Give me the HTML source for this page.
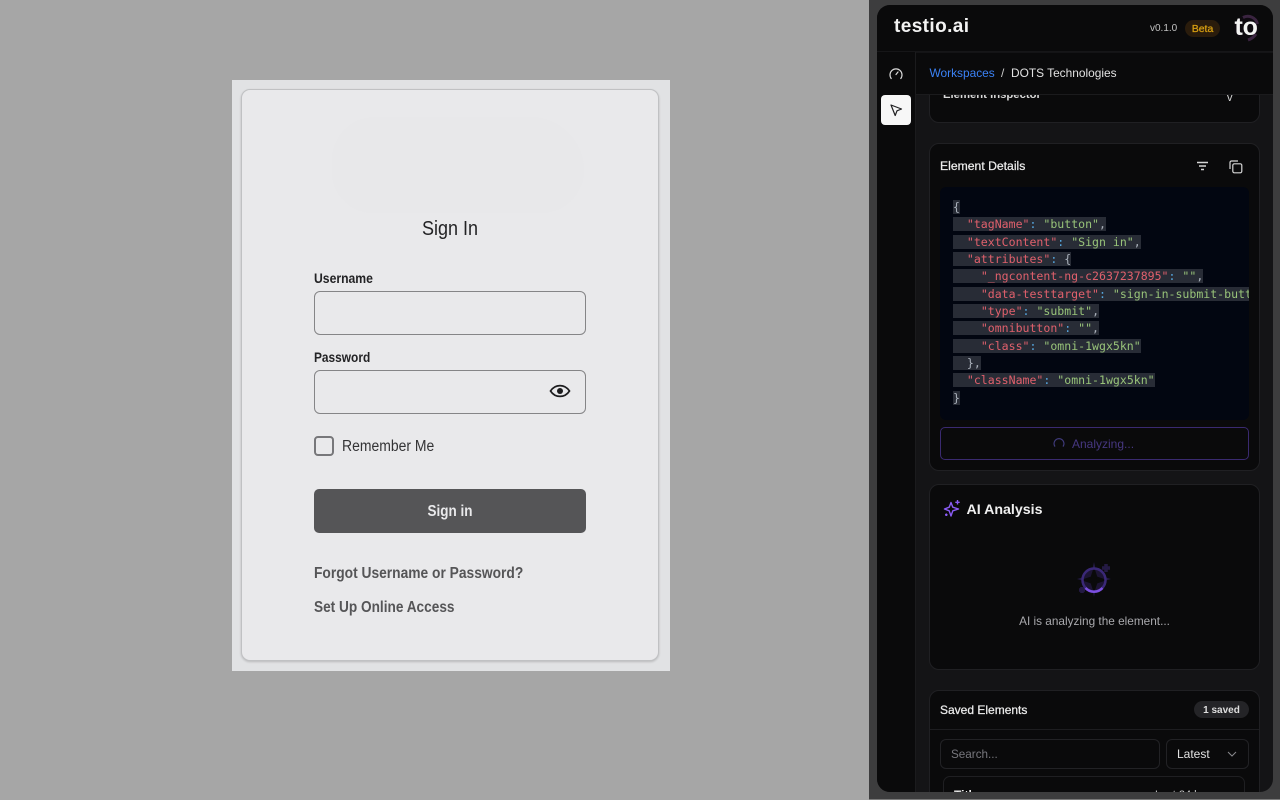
<!DOCTYPE html>
<html lang="en">
<head>
<meta charset="utf-8">
<title>Sign In</title>
<style>
*{box-sizing:border-box}
html,body{margin:0;padding:0;width:1280px;height:800px;overflow:hidden;background:#a6a6a6;font-family:"Liberation Sans",sans-serif}
.a{position:absolute}
.t{position:absolute;white-space:nowrap;line-height:1}
.sx{transform-origin:0 50%}
svg{position:absolute;display:block;overflow:visible}
.input{position:absolute;left:314px;width:272px;height:44px;border:1px solid #858587;border-radius:6px;background:#e9e9eb}
.login{color:#232325}
.card{position:absolute;left:13px;width:331px;background:#0a0a0b;border:1px solid #202023;border-radius:10px}
pre{margin:0;position:absolute;left:13px;top:12px;font:11.55px/17.33px "DejaVu Sans Mono","Liberation Mono",monospace;color:#c9d1d9;white-space:pre}
pre i{font-style:normal;background:#282c36}
.k{color:#e0606c}.s{color:#98c379}.p{color:#56a6de}.b{color:#aab1bb}
.med{-webkit-text-stroke:.25px currentColor}
</style>
</head>
<body>
<!-- Login page -->
<div class="a" style="left:232px;top:80px;width:438px;height:591px;background:#e1e2e4"></div>
<div class="a" style="left:241px;top:89px;width:418px;height:572px;background:#e9e9eb;border:1px solid #c0c1c3;border-radius:9px;box-shadow:0 1px 2px rgba(0,0,0,.18)"></div>
<div class="a" style="left:332px;top:117px;width:252px;height:96px;background:#e8e8ea;border-radius:48px 60px 48px 46px"></div>
<div class="t login" style="left:350px;width:200px;text-align:center;top:219px;font-size:20px;transform:scaleX(.9)">Sign In</div>
<div class="t login sx" style="left:314px;top:271px;font-size:14px;font-weight:bold;transform:scaleX(.87)">Username</div>
<div class="input" style="top:291px"></div>
<div class="t login sx" style="left:314px;top:350px;font-size:14px;font-weight:bold;transform:scaleX(.85)">Password</div>
<div class="input" style="top:370px"></div>
<svg style="left:549px;top:383px" width="22" height="16" viewBox="0 0 22 16" fill="none"><path d="M1.500 8C4 4.200 7.200 2.600 11 2.600S18 4.200 20.500 8C18 11.800 14.800 13.400 11 13.400S4 11.800 1.500 8Z" stroke="#1c1c1e" stroke-width="1.700"/><circle cx="11" cy="8" r="3" fill="#1c1c1e"/></svg>
<div class="a" style="left:314px;top:436px;width:20px;height:20px;border:2px solid #77777a;border-radius:4px"></div>
<div class="t sx" style="left:342px;top:439px;font-size:15.500px;color:#333335;transform:scaleX(.9)">Remember Me</div>
<div class="a" style="left:314px;top:489px;width:272px;height:44px;background:#555557;border-radius:5px"></div>
<div class="t" style="left:314px;width:272px;text-align:center;top:504px;font-size:15.500px;font-weight:bold;color:#e9e9eb;transform:scaleX(.87)">Sign in</div>
<div class="t sx" style="left:314px;top:566px;font-size:15.500px;font-weight:bold;color:#555557;transform:scaleX(.89)">Forgot Username or Password?</div>
<div class="t sx" style="left:314px;top:600px;font-size:15.500px;font-weight:bold;color:#555557;transform:scaleX(.88)">Set Up Online Access</div>

<!-- Extension panel -->
<div class="a" style="left:869px;top:0;width:411px;height:800px;background:#3d3d3e"></div>
<div class="a" style="left:869px;top:799px;width:411px;height:1px;background:#7a7a7a"></div>
<div class="a" style="left:877px;top:5px;width:396px;height:787px;background:#141416;border-radius:13px;overflow:hidden">
  <div class="a" style="left:0;top:0;width:396px;height:47px;background:#0a0a0b;border-bottom:1px solid #161618"></div>
  <div class="a" style="left:0;top:47px;width:39px;height:740px;background:#0a0a0b;border-right:1px solid #1b1b1d"></div>
</div>
<div class="t" style="left:894px;top:17px;font-size:19px;font-weight:bold;color:#f2f2f2;letter-spacing:.4px">testio.ai</div>
<div class="t" style="left:1150px;top:24px;font-size:10px;color:#c2c2c2">v0.1.0</div>
<div class="a" style="left:1185px;top:20px;width:35px;height:17px;background:#2a1c0c;border-radius:9px"></div>
<div class="t med" style="left:1185px;width:35px;text-align:center;top:24px;font-size:10.500px;color:#d9a011">Beta</div>
<div class="a" style="left:1234px;top:15px;width:25px;height:25px;background:#0e0a10;border-radius:50%"></div>
<svg style="left:1234px;top:15px" width="26" height="26" viewBox="0 0 26 26" fill="none"><path d="M9 2.500C15 -0.500 22 2.500 23.500 9" stroke="#3a2440" stroke-width="3"/><path d="M22 19C20 22 17 24 14 25" stroke="#3a2440" stroke-width="3"/></svg>
<div class="t" style="left:1234.500px;top:15px;font-size:25px;font-weight:bold;color:#f4f4f4;letter-spacing:-.2px">to</div>

<!-- Cards (clipped by panel viewport) -->
<div class="a" style="left:916px;top:53px;width:357px;height:739px;overflow:hidden">
  <div class="card" style="top:20px;height:50px"></div>
  <div class="t" style="left:27px;top:37px;font-size:11.300px;font-weight:bold;color:#d8d8d8">Element Inspector</div>
  <div class="t" style="left:311px;top:40px;font-size:11px;color:#d8d8d8">v</div>

  <div class="card" style="top:90px;height:328px"></div>
  <div class="t med" style="left:24px;top:107px;font-size:12.200px;color:#ececec">Element Details</div>
  <svg style="left:280px;top:108px" width="13" height="11" viewBox="0 0 13 11" fill="none" stroke="#d6d6d6" stroke-width="1.400"><path d="M1 1.500H12M3 5H10M5 8.500H8"/></svg>
  <svg style="left:313px;top:107px" width="14" height="14" viewBox="0 0 14 14" fill="none" stroke="#d6d6d6" stroke-width="1.200"><rect x="3.800" y="3.800" width="9" height="9" rx="1.500"/><path d="M1 9V2.500A1.500 1.500 0 0 1 2.500 1H9"/></svg>
  <div class="a" style="left:24px;top:134px;width:309px;height:233px;background:#020611;border-radius:6px;overflow:hidden">
<pre><i><span class="b">{</span></i>
<i>  <span class="k">"tagName"</span><span class="p">:</span> <span class="s">"button"</span><span class="b">,</span></i>
<i>  <span class="k">"textContent"</span><span class="p">:</span> <span class="s">"Sign in"</span><span class="b">,</span></i>
<i>  <span class="k">"attributes"</span><span class="p">:</span> <span class="b">{</span></i>
<i>    <span class="k">"_ngcontent-ng-c2637237895"</span><span class="p">:</span> <span class="s">""</span><span class="b">,</span></i>
<i>    <span class="k">"data-testtarget"</span><span class="p">:</span> <span class="s">"sign-in-submit-button"</span><span class="b">,</span></i>
<i>    <span class="k">"type"</span><span class="p">:</span> <span class="s">"submit"</span><span class="b">,</span></i>
<i>    <span class="k">"omnibutton"</span><span class="p">:</span> <span class="s">""</span><span class="b">,</span></i>
<i>    <span class="k">"class"</span><span class="p">:</span> <span class="s">"omni-1wgx5kn"</span></i>
<i>  <span class="b">},</span></i>
<i>  <span class="k">"className"</span><span class="p">:</span> <span class="s">"omni-1wgx5kn"</span></i>
<i><span class="b">}</span></i></pre>
  </div>
  <div class="a" style="left:24px;top:374px;width:309px;height:33px;border:1px solid #3a2a70;border-radius:5px"></div>
  <svg style="left:137px;top:384px" width="12" height="12" viewBox="0 0 12 12" fill="none"><path d="M2 9.600A5 5 0 1 1 10 9.600" stroke="#3f3a7a" stroke-width="1.200"/></svg>
  <div class="t" style="left:156px;top:385px;font-size:12px;color:#463780">Analyzing...</div>

  <div class="card" style="top:431px;height:186px"></div>
  <svg style="left:28px;top:447px" width="17" height="17" viewBox="0 0 17 17" fill="none" stroke="#8b5cf6" stroke-width="1.400" stroke-linejoin="round"><path d="M7 2.500L8.800 7.200L14.500 9L8.800 10.800L7 16L5.200 10.800L0.500 9L5.200 7.200Z"/><path d="M13.500 0V4.500M11.300 2.300H15.700M2.300 13.500V16M1 14.800H3.600"/></svg>
  <div class="t" style="left:50.500px;top:450px;font-size:14.200px;font-weight:bold;color:#f0f0f0">AI Analysis</div>
  <svg style="left:160px;top:508px" width="38" height="38" viewBox="0 0 38 38" fill="none"><path d="M18 1L21 14L35 18L21 22L18 36L15 22L1 18L15 14Z" fill="#241a44"/><path d="M30 3V11M26 7H34M6 26V32M3 29H9" stroke="#241a44" stroke-width="3.500"/><circle cx="18" cy="19" r="11" fill="#1c1433"/><path d="M18 9L20.500 16.500L28 19L20.500 21.500L18 29L15.500 21.500L8 19L15.500 16.500Z" fill="#0a0a0b" stroke="#0a0a0b" stroke-width="2" stroke-linejoin="round"/><circle cx="18" cy="19" r="11.500" stroke="#3a2877" stroke-width="2.500"/><path d="M9.500 27A11.500 11.500 0 0 0 26.500 27" stroke="#7c4fe0" stroke-width="2.500"/></svg>
  <div class="t" style="left:13px;width:331px;text-align:center;top:562.500px;font-size:11.800px;color:#a9a9ad">AI is analyzing the element...</div>

  <div class="card" style="top:637px;height:140px"></div>
  <div class="a" style="left:14px;top:676px;width:329px;height:1px;background:#1d1d20"></div>
  <div class="t med" style="left:24px;top:651px;font-size:12px;color:#ececec">Saved Elements</div>
  <div class="a" style="left:278px;top:648px;width:55px;height:17px;background:#242427;border-radius:9px"></div>
  <div class="t" style="left:278px;width:55px;text-align:center;top:653px;font-size:10px;font-weight:bold;color:#dedede">1 saved</div>
  <div class="a" style="left:24px;top:686px;width:220px;height:30px;border:1px solid #222225;border-radius:6px"></div>
  <div class="t" style="left:35px;top:696px;font-size:11.700px;color:#77777d">Search...</div>
  <div class="a" style="left:250px;top:686px;width:83px;height:30px;border:1px solid #222225;border-radius:6px"></div>
  <div class="t" style="left:261px;top:695px;font-size:12px;color:#e2e2e2">Latest</div>
  <svg style="left:311px;top:698px" width="10" height="6" viewBox="0 0 10 6" fill="none" stroke="#8a8a8e" stroke-width="1"><path d="M1 1L5 5L9 1"/></svg>
  <div class="a" style="left:27px;top:723px;width:302px;height:40px;border:1px solid #1f1f22;border-radius:7px"></div>
  <div class="t" style="left:38px;top:736px;font-size:12px;font-weight:bold;color:#ececec">Title</div>
  <div class="t" style="left:239px;top:737px;font-size:11px;color:#c8c8c8">Last 24 hours</div>
</div>

<!-- Breadcrumb bar above cards -->
<div class="a" style="left:916px;top:53px;width:357px;height:42px;background:#0a0a0b;border-bottom:1px solid #1b1b1d;overflow:hidden">
  <div class="t" style="left:13.500px;top:15px;font-size:11.900px;color:#3b82f6">Workspaces</div>
  <div class="t" style="left:85px;top:15px;font-size:11.900px;color:#cfcfcf">/</div>
  <div class="t" style="left:95px;top:15px;font-size:11.900px;color:#e2e2e2">DOTS Technologies</div>
</div>

<!-- Sidebar icons -->
<svg style="left:889px;top:68px" width="14" height="12" viewBox="0 0 14 12" fill="none" stroke="#d8d8d8" stroke-width="1.200" stroke-linecap="round"><path d="M2.200 10.500A6 6 0 1 1 11.800 10.500M7 6.500L9 4"/></svg>
<div class="a" style="left:881px;top:95px;width:30px;height:30px;background:#f7f7f7;border-radius:4px"></div>
<svg style="left:890px;top:104px" width="13" height="13" viewBox="0 0 13 13" fill="none" stroke="#202022" stroke-width="1.200" stroke-linejoin="round"><path d="M1 1L11.500 5L7 6.800L5.200 11.500Z"/></svg>
</body>
</html>
